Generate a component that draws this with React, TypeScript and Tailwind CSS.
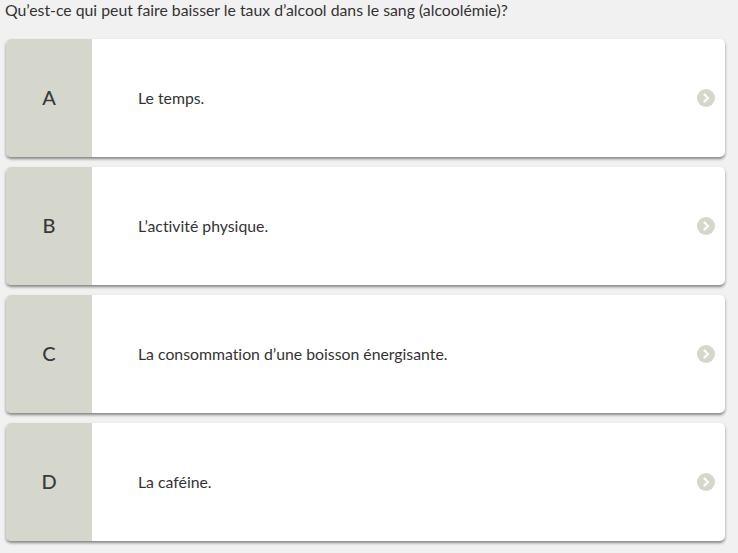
import React from "react";

const options = [
  { letter: "A", text: "Le temps." },
  { letter: "B", text: "L’activité physique." },
  { letter: "C", text: "La consommation d’une boisson énergisante." },
  { letter: "D", text: "La caféine." },
];

const Chevron: React.FC = () => (
  <svg width="18" height="18" viewBox="0 0 18 18" className="shrink-0">
    <circle cx="9" cy="9" r="9" fill="#d5d7cd" />
    <path d="M7.5 5.5 L11 9 L7.5 12.5" stroke="#fff" strokeWidth="2.4" fill="none" strokeLinecap="round" strokeLinejoin="round" />
  </svg>
);

const App: React.FC = () => {
  return (
    <div
      className="w-[738px] h-[553px] bg-[#f1f1f1] overflow-hidden [font-variant-ligatures:none]"
      style={{ fontFamily: "Lato, 'Open Sans', sans-serif" }}
    >
      <p className="pl-[5px] text-[15.8px] leading-[19px] text-[#333]">
        Qu’est-ce qui peut faire baisser le taux d’alcool dans le sang (alcoolémie)?
      </p>

      <div className="mt-[20px] ml-[6px] w-[719px] flex flex-col gap-[10px]">
        {options.map((o) => (
          <div
            key={o.letter}
            className="h-[118px] flex bg-white rounded-[5px] overflow-hidden shadow-[0_2px_3px_rgba(0,0,0,0.45)]"
          >
            <div className="w-[86px] bg-[#d5d7cd] flex items-center justify-center pb-[2px] text-[20px] font-medium text-[#3a3a3a]">
              {o.letter}
            </div>
            <div className="flex-1 flex items-center pl-[46px] pr-[10px] text-[15.8px] text-[#333]">
              <span className="flex-1 pb-[1px]">{o.text}</span>
              <Chevron />
            </div>
          </div>
        ))}
      </div>
    </div>
  );
};

export default App;
